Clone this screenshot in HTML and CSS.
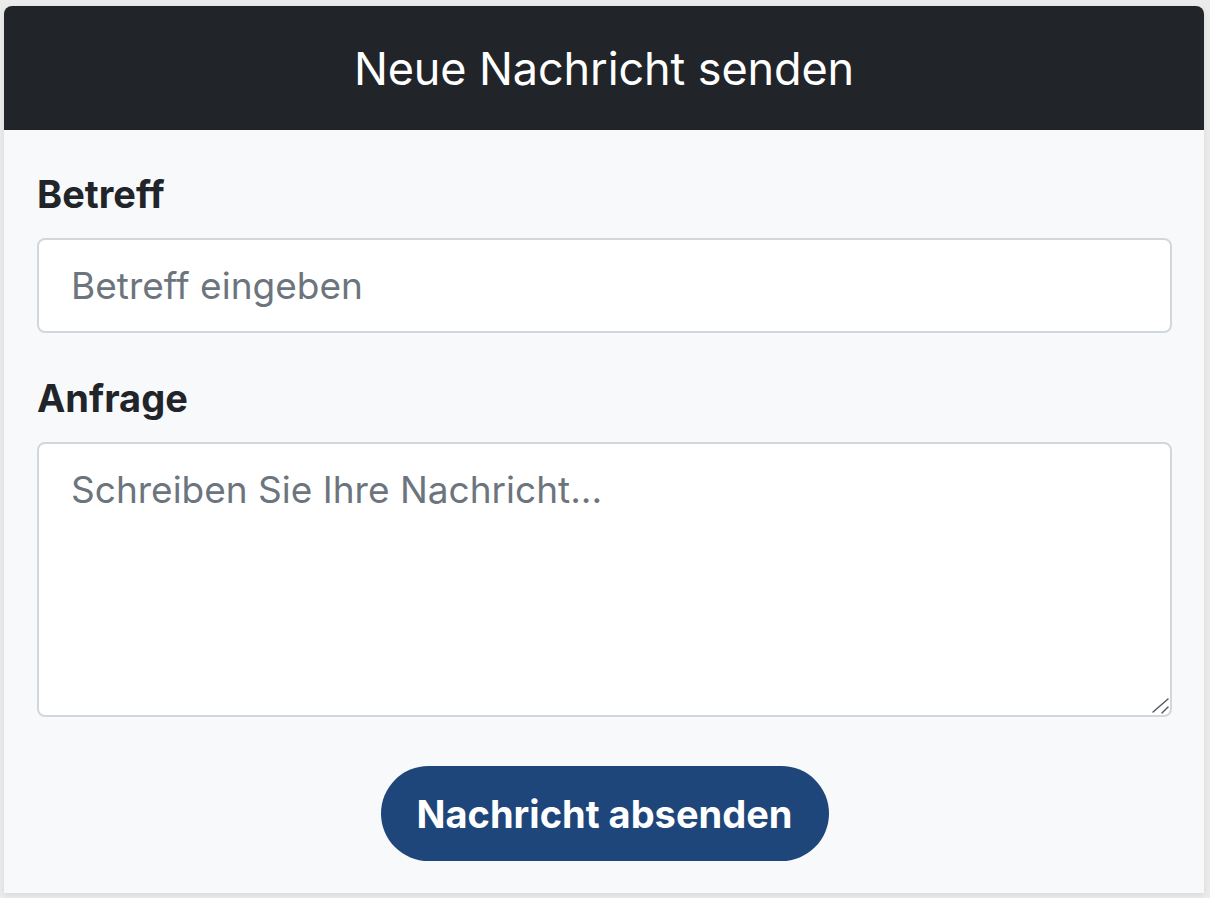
FILE: index.html
```html
<!DOCTYPE html>
<html lang="de">
<head>
<meta charset="utf-8">
<title>Neue Nachricht senden</title>
<link rel="stylesheet" href="styles.css">
</head>
<body>
<div class="card">
  <div class="card-header">Neue Nachricht senden</div>
  <form class="card-body">
    <div class="field">
      <label class="label" for="betreff">Betreff</label>
      <input class="control" id="betreff" type="text" placeholder="Betreff eingeben">
    </div>
    <div class="field">
      <label class="label" for="anfrage">Anfrage</label>
      <div class="area-wrap">
        <textarea class="control area" id="anfrage" placeholder="Schreiben Sie Ihre Nachricht..."></textarea>
        <svg class="grip" width="20" height="20" viewBox="0 0 20 20" aria-hidden="true">
          <line x1="17" y1="3" x2="2" y2="16" />
          <line x1="17" y1="11" x2="11" y2="17" />
        </svg>
      </div>
    </div>
    <div class="actions">
      <button class="btn" type="button">Nachricht absenden</button>
    </div>
  </form>
</div>
</body>
</html>
```

FILE: styles.css
```css
html, body {
  margin: 0;
  padding: 0;
}
body {
  background: #ebebeb;
  font-family: Inter, "Noto Sans", sans-serif;
  padding: 6px 6px 0 4px;
  height: 898px;
  box-sizing: border-box;
  overflow: hidden;
}
.card {
  background: #f8f9fa;
  border-radius: 8px 8px 0 0;
  box-shadow: 0 2px 6px rgba(0,0,0,0.08);
  height: 887px;
  display: flex;
  flex-direction: column;
}
.card-header {
  background: #212529;
  color: #ffffff;
  height: 124px;
  border-radius: 8px 8px 0 0;
  display: flex;
  align-items: center;
  justify-content: center;
  font-size: 45px;
  font-weight: 400;
  letter-spacing: -0.1px;
}
.card-body {
  padding: 40px 32px 0 33px;
  margin: 0;
  display: flex;
  flex-direction: column;
}
.field {
  display: flex;
  flex-direction: column;
  margin-bottom: 41px;
}
.label {
  font-size: 38px;
  font-weight: 700;
  color: #212529;
  line-height: 48px;
  margin-bottom: 20px;
}
.control {
  font-family: Inter, "Noto Sans", sans-serif;
  font-size: 37px;
  color: #212529;
  background: #ffffff;
  border: 2px solid #d3d7dc;
  border-radius: 8px;
  height: 95px;
  box-sizing: border-box;
  padding: 0 32px;
  outline: none;
}
.control::placeholder {
  color: #6c757d;
}
.area-wrap {
  position: relative;
  display: flex;
  flex-direction: column;
}
.area {
  height: 275px;
  padding: 22px 32px;
  line-height: 48px;
  resize: none;
}
.grip {
  position: absolute;
  right: 1px;
  bottom: 1px;
  stroke: #555a60;
  stroke-width: 1.5;
  stroke-linecap: round;
  pointer-events: none;
}
.actions {
  display: flex;
  justify-content: center;
  margin-top: 8px;
}
.btn {
  background: #1e467a;
  color: #ffffff;
  border: none;
  border-radius: 48px;
  width: 448px;
  height: 95px;
  font-family: Inter, "Noto Sans", sans-serif;
  font-size: 38px;
  font-weight: 700;
  cursor: pointer;
}
```
